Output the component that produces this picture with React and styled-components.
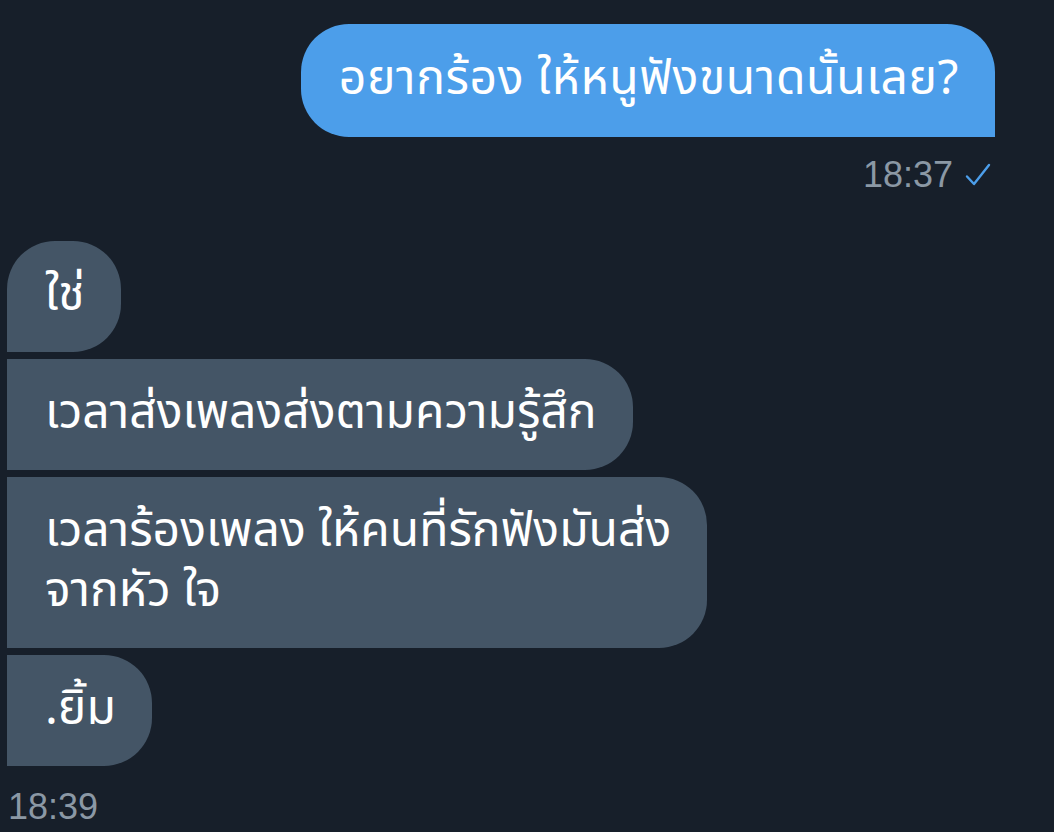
import { createGlobalStyle } from "styled-components";
import styled from "styled-components";

const GlobalStyle = createGlobalStyle`
  html, body {
    margin: 0;
    padding: 0;
    background: #171f2a;
  }
  body {
    font-family: "Noto Sans Thai", "Noto Sans", "Liberation Sans", sans-serif;
  }
`;

const Thread = styled.div`
  width: 1054px;
  height: 832px;
  box-sizing: border-box;
  padding: 24px 59px 0 7px;
  display: flex;
  flex-direction: column;
  overflow: hidden;
  background: #171f2a;
`;

const Bubble = styled.div`
  box-sizing: border-box;
  padding: ${(p) => (p.sent ? "26px 36px 27px 38px" : "25px 36px 26px 38px")};
  font-size: 48px;
  line-height: 60px;
  letter-spacing: ${(p) => (p.sent ? "0.6px" : "0")};
  white-space: nowrap;
  color: #ffffff;
  align-self: ${(p) => (p.sent ? "flex-end" : "flex-start")};
  background: ${(p) => (p.sent ? "#4c9eea" : "#445566")};
  border-radius: ${(p) => p.radius};
  margin-bottom: ${(p) => p.gap || 0}px;
`;

const Meta = styled.div`
  display: flex;
  align-items: center;
  gap: 12px;
  align-self: ${(p) => (p.sent ? "flex-end" : "flex-start")};
  margin: ${(p) => p.margin};
  font-family: "Liberation Sans", Arial, sans-serif;
  font-size: 36px;
  line-height: 40px;
  color: #8b98a5;
  svg {
    display: block;
  }
`;

const received = [
  { text: "ใช่", radius: "48px 48px 48px 0" },
  { text: "เวลาส่งเพลงส่งตามความรู้สึก", radius: "0 48px 48px 0" },
  {
    text: (
      <>
        เวลาร้องเพลง ให้คนที่รักฟังมันส่ง
        <br />
        จากหัว ใจ
      </>
    ),
    radius: "0 48px 48px 0",
  },
  { text: ".ยิ้ม", radius: "0 48px 48px 0" },
];

export default function App() {
  return (
    <>
      <GlobalStyle />
      <Thread>
        <Bubble sent radius="48px 48px 0 48px">
          อยากร้อง ให้หนูฟังขนาดนั้นเลย?
        </Bubble>
        <Meta sent margin="18px 4px 46px 0">
          18:37
          <svg width="26" height="24" viewBox="0 0 26 24" fill="none">
            <path
              d="M2 13.5 L9 21 L24 2"
              stroke="#4c9eea"
              strokeWidth="2.4"
              strokeLinecap="round"
              strokeLinejoin="round"
            />
          </svg>
        </Meta>
        {received.map((m, i) => (
          <Bubble key={i} radius={m.radius} gap={7}>
            {m.text}
          </Bubble>
        ))}
        <Meta margin="14px 0 0 1px">18:39</Meta>
      </Thread>
    </>
  );
}
